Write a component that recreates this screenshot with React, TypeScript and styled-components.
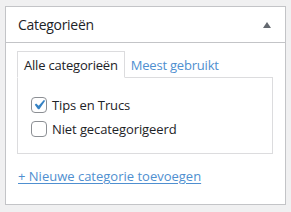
import styled, { createGlobalStyle } from 'styled-components';

const GlobalStyle = createGlobalStyle`
  body {
    margin: 0;
    background: #f0f0f1;
    font-family: "Open Sans", "Noto Sans", sans-serif;
    color: #1d2327;
  }
`;

const Page = styled.div`
  padding: 6px 0 0 5px;
`;

const Box = styled.div`
  box-sizing: border-box;
  width: 281px;
  height: 199px;
  background: #fff;
  border: 1px solid #c3c4c7;
`;

const Header = styled.div`
  box-sizing: border-box;
  height: 36px;
  display: flex;
  align-items: center;
  justify-content: space-between;
  padding: 0 14px 0 12px;
  border-bottom: 1px solid #c3c4c7;
`;

const Title = styled.h2`
  margin: 0;
  font-size: 14px;
  font-weight: 400;
  letter-spacing: -0.3px;
`;

const Toggle = styled.span`
  width: 0;
  height: 0;
  border-left: 4px solid transparent;
  border-right: 4px solid transparent;
  border-bottom: 6px solid #646970;
`;

const Inside = styled.div`
  padding: 8px 12px 0 11px;
`;

const Tabs = styled.div`
  display: flex;
  align-items: flex-end;
`;

const Tab = styled.a<{ $active?: boolean }>`
  box-sizing: border-box;
  height: 27px;
  display: flex;
  align-items: center;
  padding: 0 6px;
  margin-bottom: -1px;
  font-size: 13px;
  letter-spacing: -0.2px;
  text-decoration: none;
  cursor: pointer;
  color: ${(p) => (p.$active ? '#1d2327' : '#4f8fd0')};
  background: ${(p) => (p.$active ? '#fff' : 'transparent')};
  border: 1px solid ${(p) => (p.$active ? '#dcdcde' : 'transparent')};
  border-bottom-color: ${(p) => (p.$active ? '#fff' : 'transparent')};
  margin-left: ${(p) => (p.$active ? '0' : '-1px')};
`;

const Panel = styled.div`
  box-sizing: border-box;
  width: 256px;
  height: 77px;
  border: 1px solid #dcdcde;
  padding: 19px 13px 0;
  display: flex;
  flex-direction: column;
  gap: 8px;
`;

const Item = styled.label`
  display: flex;
  align-items: center;
  gap: 5px;
  font-size: 13px;
  letter-spacing: -0.1px;
  height: 16px;
`;

const Check = styled.span`
  box-sizing: border-box;
  width: 16px;
  height: 16px;
  border: 1px solid #8c8f94;
  border-radius: 4px;
  background: #fff;
  display: flex;
  align-items: center;
  justify-content: center;
  flex-shrink: 0;
  overflow: visible;
`;

const CheckMark = styled.svg`
  width: 20px;
  height: 20px;
  margin: -2px;
  flex-shrink: 0;
`;

const AddLink = styled.a`
  display: inline-block;
  margin: 13px 0 0 1px;
  font-size: 13px;
  letter-spacing: 0;
  color: #4f8fd0;
  text-decoration: underline;
  text-underline-offset: 2px;
`;

const categories = [
  { name: 'Tips en Trucs', checked: true },
  { name: 'Niet gecategorigeerd', checked: false },
];

export default function App() {
  return (
    <>
      <GlobalStyle />
      <Page>
        <Box>
          <Header>
            <Title>Categorieën</Title>
            <Toggle />
          </Header>
          <Inside>
            <Tabs>
              <Tab $active>Alle categorieën</Tab>
              <Tab>Meest gebruikt</Tab>
            </Tabs>
            <Panel>
              {categories.map((c) => (
                <Item key={c.name}>
                  <Check>
                    {c.checked && (
                      <CheckMark viewBox="0 0 20 20">
                        <path
                          d="M14.83 4.89l1.34.94-5.81 8.38H9.02L5.78 9.67l1.34-1.25 2.57 2.4z"
                          fill="#3582c4"
                        />
                      </CheckMark>
                    )}
                  </Check>
                  {c.name}
                </Item>
              ))}
            </Panel>
            <AddLink href="#">+ Nieuwe categorie toevoegen</AddLink>
          </Inside>
        </Box>
      </Page>
    </>
  );
}
